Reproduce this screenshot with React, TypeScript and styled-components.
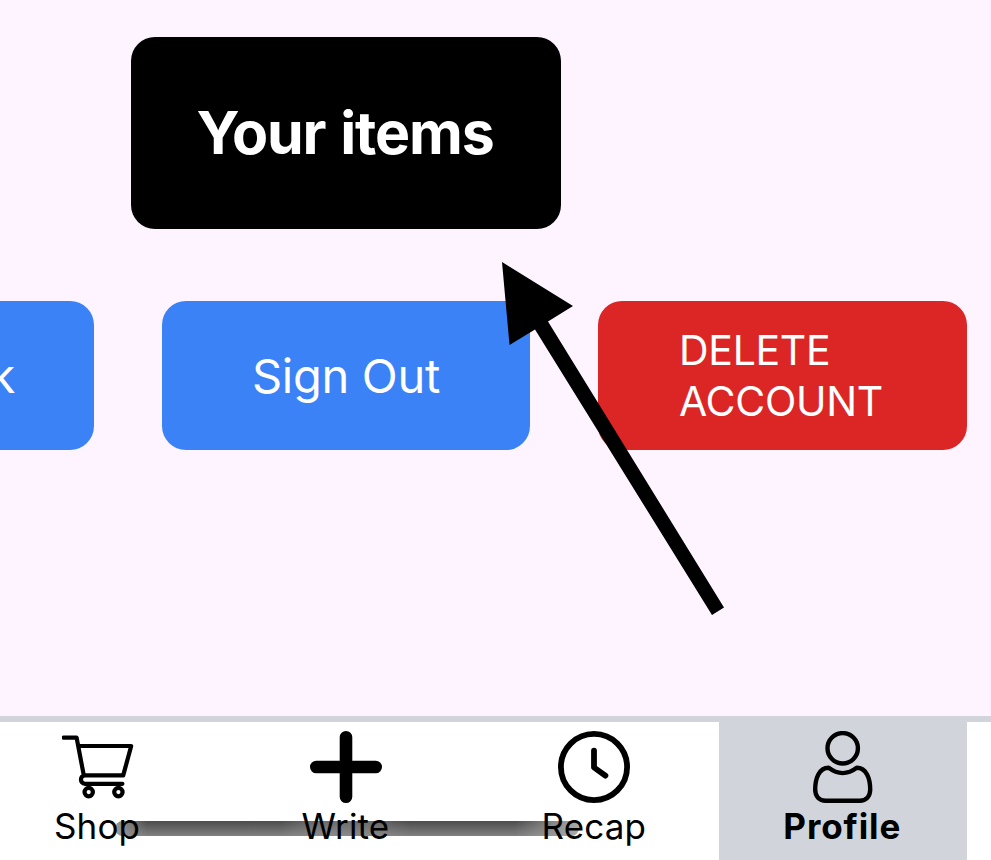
import React from "react";
import styled, { createGlobalStyle } from "styled-components";

const GlobalStyle = createGlobalStyle`
  *, *::before, *::after { box-sizing: border-box; }
  html, body { margin: 0; padding: 0; overflow: hidden; }
  button { border: 0; padding: 0; margin: 0; font: inherit; }
`;

const Screen = styled.main`
  position: relative;
  display: flex;
  flex-direction: column;
  width: 991px;
  height: 860px;
  overflow: hidden;
  background: #fdf4ff;
  font-family: Inter, "Liberation Sans", sans-serif;
`;

const Content = styled.section`
  flex: 1;
  display: flex;
  flex-direction: column;
  align-items: flex-start;
  gap: 72px;
  padding-top: 37px;
`;

const ItemsButton = styled.button`
  width: 430px;
  height: 192px;
  margin-left: 131px;
  padding-right: 2px;
  border-radius: 24px;
  background: #000;
  color: #fff;
  font-size: 59px;
  font-weight: 700;
  line-height: 84px;
  letter-spacing: -1.15px;
  word-spacing: 2px;
`;

const Actions = styled.div`
  display: flex;
  gap: 68px;
  margin-left: -274px;
`;

const ActionButton = styled.button<{ $variant?: "danger" | "clipped" }>`
  flex: none;
  display: flex;
  align-items: center;
  justify-content: ${(p) =>
    p.$variant === "danger" ? "flex-start" : p.$variant === "clipped" ? "flex-end" : "center"};
  width: ${(p) => (p.$variant === "danger" ? 369 : 368)}px;
  height: 149px;
  padding-left: ${(p) => (p.$variant === "danger" ? 81 : 0)}px;
  padding-right: ${(p) => (p.$variant === "clipped" ? 79 : 0)}px;
  border-radius: 24px;
  background: ${(p) => (p.$variant === "danger" ? "#dc2626" : "#3b82f6")};
  color: #fff;
  font-size: ${(p) => (p.$variant === "danger" ? 41 : 47)}px;
  line-height: ${(p) => (p.$variant === "danger" ? 51 : 58)}px;
  letter-spacing: -0.3px;
  text-align: left;
`;

const TabBar = styled.nav`
  position: relative;
  flex: none;
  display: flex;
  height: 144px;
  border-top: 6px solid #d1d5db;
  background: #fff;
`;

const Tabs = styled.div`
  display: flex;
  margin-left: -26.6px;
`;

const Tab = styled.button<{ $active?: boolean }>`
  flex: none;
  display: flex;
  flex-direction: column;
  align-items: center;
  width: 248.4px;
  height: 138px;
  padding-top: 9px;
  background: ${(p) => (p.$active ? "#d1d5db" : "transparent")};
  color: #000;
  font-size: 35px;
  font-weight: ${(p) => (p.$active ? 700 : 400)};
  line-height: 47px;
  letter-spacing: ${(p) => (p.$active ? 0.9 : 0.15)}px;
`;

const Icon = styled.svg`
  flex: none;
  display: block;
  width: 72px;
  height: 72px;
  fill: none;
  stroke: #000;
  stroke-linecap: round;
  stroke-linejoin: round;
`;

const Label = styled.span`
  position: relative;
  z-index: 1;
  margin-right: 1px;
`;

const HomeIndicator = styled.div`
  position: absolute;
  left: 115px;
  top: 99px;
  width: 464px;
  height: 15px;
  border-radius: 8px;
  background:
    linear-gradient(90deg, #999 0, #9990 32px, #9990 165px, #9996 200px, #9996 255px, #9990 295px, #9990 400px, #aaa 464px),
    linear-gradient(#4c4c4c, #808080);
`;

const Pointer = styled.svg`
  position: absolute;
  left: 490px;
  top: 250px;
  width: 250px;
  height: 380px;
  pointer-events: none;
`;

function CartIcon() {
  return (
    <Icon viewBox="0 0 72 72" strokeWidth="4.2">
      <path d="M1.4 6.6H14.6L21.8 44.4M16.5 15H69.2L61.2 44.4H23C17.6 44.4 17.6 52.8 23 52.8H60.4" />
      <circle cx="26.7" cy="61.1" r="4.2" />
      <circle cx="56.4" cy="61.1" r="4.2" />
    </Icon>
  );
}

function PlusIcon() {
  return (
    <Icon viewBox="0 0 72 72" strokeWidth="12.6">
      <path d="M36 6.3V65.7M6.3 36H65.7" />
    </Icon>
  );
}

function ClockIcon() {
  return (
    <Icon viewBox="0 0 72 72" strokeWidth="5.8">
      <circle cx="36" cy="36" r="33.1" />
      <path d="M36 19.6V36.5L47.4 44.6" />
    </Icon>
  );
}

function ProfileIcon() {
  return (
    <Icon viewBox="0 0 72 72" strokeWidth="4.4">
      <circle cx="35.7" cy="17.3" r="15.2" />
      <path d="M21.7 36.8C11.7 36.8 8.2 48 8.2 58.5C8.2 65.5 12.2 69.7 18.7 69.7H52.7C59.2 69.7 63.2 65.5 63.2 58.5C63.2 48 59.7 36.8 49.7 36.8C40.7 43.7 30.7 43.7 21.7 36.8Z" />
    </Icon>
  );
}

const tabs = [
  { label: "Shop", icon: CartIcon },
  { label: "Write", icon: PlusIcon },
  { label: "Recap", icon: ClockIcon },
  { label: "Profile", icon: ProfileIcon, active: true },
];

export default function App() {
  return (
    <Screen>
      <GlobalStyle />
      <Content>
        <ItemsButton>Your items</ItemsButton>
        <Actions>
          <ActionButton $variant="clipped">k</ActionButton>
          <ActionButton>Sign Out</ActionButton>
          <ActionButton $variant="danger">DELETE<br />ACCOUNT</ActionButton>
        </Actions>
      </Content>
      <TabBar>
        <Tabs>
          {tabs.map(({ label, icon: TabIcon, active }) => (
            <Tab key={label} $active={active}>
              <TabIcon />
              <Label>{label}</Label>
            </Tab>
          ))}
        </Tabs>
        <HomeIndicator />
      </TabBar>
      <Pointer viewBox="490 250 250 380">
        <path d="M502 262L573 306L548 321.5L724 607.5L712 615L535 329.5L509.5 345Z" />
      </Pointer>
    </Screen>
  );
}
